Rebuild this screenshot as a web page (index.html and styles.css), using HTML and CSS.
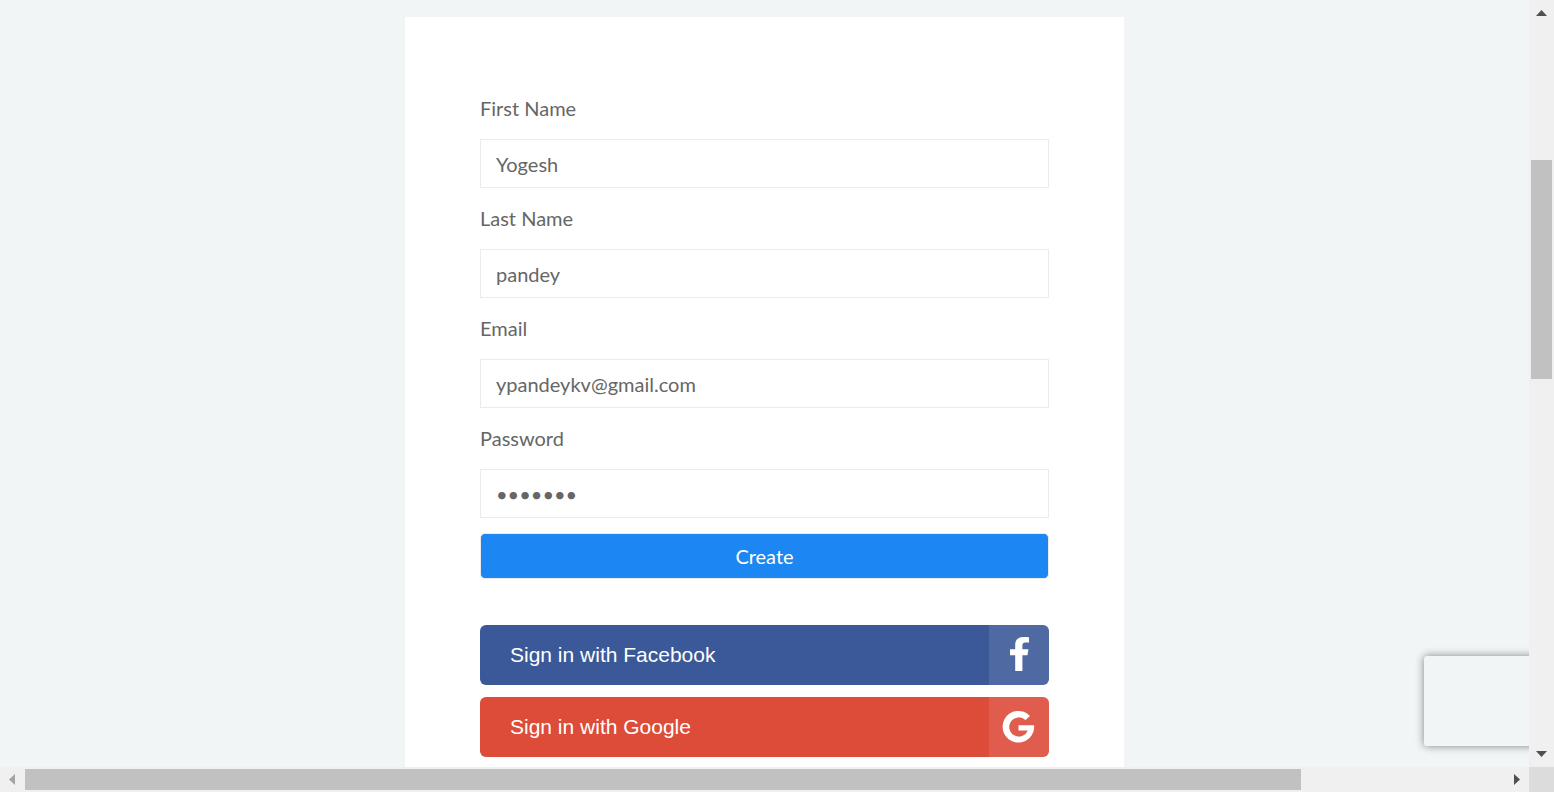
FILE: index.html
```html
<!DOCTYPE html>
<html lang="en">
<head>
  <meta charset="utf-8">
  <meta name="viewport" content="width=device-width, initial-scale=1">
  <title>Create Account</title>
  <link rel="stylesheet" href="styles.css">
</head>
<body>
  <div class="window">
    <main class="page">
      <section class="card">
        <form class="form">
          <div class="field">
            <label for="first-name">First Name</label>
            <input id="first-name" type="text" value="Yogesh">
          </div>
          <div class="field">
            <label for="last-name">Last Name</label>
            <input id="last-name" type="text" value="pandey">
          </div>
          <div class="field">
            <label for="email">Email</label>
            <input id="email" type="email" value="ypandeykv@gmail.com">
          </div>
          <div class="field">
            <label for="password">Password</label>
            <input id="password" type="password" value="abcdefg">
          </div>
          <button class="create" type="submit">Create</button>
        </form>
        <div class="social">
          <a class="social-link facebook" href="#">
            <span class="social-text">Sign in with Facebook</span>
            <svg class="social-icon" viewBox="0 0 60 60" aria-hidden="true"><path d="M40 12.2V17.4H36.8C34.2 17.4 33.4 18.6 33.4 20.6V24.2H39.4L38.5 30.3H33.4V46H26.2V30.3H21V24.2H26.2V19.6C26.2 14.6 29.3 12 34.4 12C36.8 12 39.2 12.1 40 12.2Z"/></svg>
          </a>
          <a class="social-link google" href="#">
            <span class="social-text">Sign in with Google</span>
            <svg class="social-icon" viewBox="0 0 60 60" aria-hidden="true"><path d="M40.9 18.9L36.5 23A9.6 9.6 0 1 0 38.8 33.5H29.5V28.2H45.1A15.8 15.8 0 1 1 40.9 18.9Z"/></svg>
          </a>
        </div>
      </section>
      <div class="badge"></div>
    </main>
    <div class="scroll vertical" aria-hidden="true">
      <svg class="arrow" viewBox="0 0 25 25"><path d="M12.5 10L18 16H7Z"/></svg>
      <span class="before"></span><span class="thumb"></span><span class="after"></span>
      <svg class="arrow" viewBox="0 0 25 25"><path d="M7 9H18L12.5 15Z"/></svg>
    </div>
    <div class="scroll horizontal" aria-hidden="true">
      <svg class="arrow disabled" viewBox="0 0 25 25"><path d="M9 12.5L15 7V18Z"/></svg>
      <span class="thumb"></span><span class="after"></span>
      <svg class="arrow" viewBox="0 0 25 25"><path d="M10 7L16 12.5L10 18Z"/></svg>
    </div>
    <div class="corner"></div>
  </div>
</body>
</html>
```
FILE: styles.css
```css
* {
  box-sizing: border-box;
}

body {
  margin: 0;
  font-family: Lato, "Liberation Sans", sans-serif;
  font-size: 20px;
  line-height: 30px;
  color: #666;
}

.window {
  display: grid;
  grid-template-columns: minmax(0, 1fr) 25px;
  grid-template-rows: minmax(0, 1fr) 25px;
  height: 100vh;
}

.page {
  position: relative;
  overflow: hidden;
  padding-top: 17px;
  background: #f1f5f6;
}

.card {
  max-width: 719px;
  margin: 0 auto;
  padding: 76px 75px;
  background: #fff;
}

.form {
  display: flex;
  flex-direction: column;
  gap: 15px;
}

.field {
  display: flex;
  flex-direction: column;
  gap: 16px;
}

.field input {
  width: 100%;
  height: 49px;
  padding: 0 15px;
  border: 1px solid #ebebeb;
  border-radius: 0;
  background: #fff;
  color: #666;
  font: inherit;
  outline: none;
}

.create {
  height: 46px;
  padding: 0;
  border: 1px solid #ebebeb;
  border-radius: 5px;
  background: #1c86f2;
  color: #fff;
  font: inherit;
}

.social {
  display: flex;
  flex-direction: column;
  gap: 12px;
  margin-top: 46px;
}

.social-link {
  display: flex;
  align-items: center;
  justify-content: space-between;
  height: 60px;
  padding-left: 30px;
  border-radius: 6px;
  overflow: hidden;
  color: #fff;
  font-family: "Liberation Sans", Arial, sans-serif;
  font-size: 21px;
  text-decoration: none;
}

.facebook {
  background: #3b5998;
}

.google {
  background: #dd4b39;
}

.social-icon {
  width: 60px;
  height: 60px;
  background: rgba(255, 255, 255, 0.1);
  fill: #fff;
}

.badge {
  position: absolute;
  right: -279px;
  bottom: 21px;
  width: 384px;
  height: 90px;
  border-radius: 3px;
  box-shadow: 0 0 8px gray;
}

.scroll {
  display: flex;
  background: #f0f0f0;
}

.vertical {
  flex-direction: column;
  padding: 0 2px;
}

.horizontal {
  padding: 2px 0;
}

.arrow {
  flex: none;
  align-self: center;
  width: 25px;
  height: 25px;
  fill: #505050;
}

.disabled {
  fill: #a3a3a3;
}

.thumb {
  background: #c1c1c1;
}

.vertical .before {
  flex: 135;
}

.vertical .thumb {
  flex: 219;
}

.vertical .after {
  flex: 363;
}

.horizontal .thumb {
  flex: 1276;
}

.horizontal .after {
  flex: 203;
}

.corner {
  background: #dcdcdc;
}
```
